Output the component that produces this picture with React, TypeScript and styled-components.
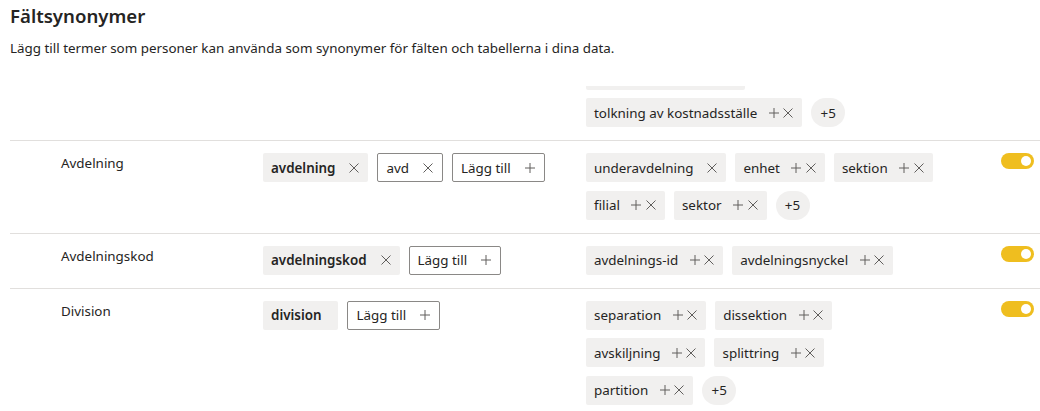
import React from "react";
import styled, { createGlobalStyle } from "styled-components";

const GlobalStyle = createGlobalStyle`
  html, body { margin: 0; padding: 0; background: #ffffff; }
  body { font-family: "Noto Sans", "Segoe UI", sans-serif; color: #252423; overflow: hidden; }
  * { box-sizing: border-box; }
`;

const Page = styled.div`
  width: 1040px;
  height: 411px;
  padding: 2px 0 0 10px;
  display: flex;
  flex-direction: column;
  overflow: hidden;
`;

const Title = styled.h1`
  margin: 0;
  font-size: 18.6px;
  line-height: 28px;
  font-weight: 600;
`;

const Subtitle = styled.p`
  margin: 8px 0 0;
  font-size: 13.4px;
  line-height: 20px;
`;

const Viewport = styled.div`
  margin-top: 28px;
  flex: 1;
  overflow: hidden;
`;

const List = styled.div<{ $offset: number }>`
  margin-top: ${(p) => -p.$offset}px;
  display: flex;
  flex-direction: column;
`;

const Row = styled.div`
  display: grid;
  grid-template-columns: 202px 323px 350px 1fr;
  padding: 12px 6px 13px 51px;
  border-bottom: 1px solid #e1dfdd;
  &:last-child { border-bottom: none; }
`;

const Name = styled.div`
  font-size: 13.4px;
  line-height: 20px;
`;

const ChipWrap = styled.div`
  display: flex;
  flex-wrap: wrap;
  column-gap: 9px;
  row-gap: 8.5px;
  align-content: flex-start;
`;

const Chip = styled.div<{
  $variant: "filled" | "outline";
  $bold?: boolean;
  $tight?: boolean;
  $plain?: boolean;
}>`
  height: 29px;
  display: inline-flex;
  align-items: center;
  gap: ${(p) => (p.$tight ? 11.5 : 14)}px;
  padding: 0 ${(p) => (p.$plain ? 17 : 9)}px 0 8px;
  border-radius: 2px;
  font-size: 13.4px;
  line-height: 20px;
  white-space: nowrap;
  font-weight: ${(p) => (p.$bold ? 600 : 400)};
  background: ${(p) => (p.$variant === "filled" ? "#f1f0ef" : "#ffffff")};
  border: ${(p) => (p.$variant === "outline" ? "1px solid #8a8886" : "none")};
`;

const Actions = styled.span`
  display: inline-flex;
  align-items: center;
  gap: 4.5px;
`;

const More = styled.div`
  height: 29px;
  min-width: 34px;
  padding: 0 7px;
  border-radius: 15px;
  background: #f1f0ef;
  display: inline-flex;
  align-items: center;
  justify-content: center;
  font-size: 13.4px;
`;

const Toggle = styled.div`
  justify-self: end;
  width: 33px;
  height: 16px;
  border-radius: 8px;
  background: #efbe1f;
  display: flex;
  align-items: center;
  justify-content: flex-end;
  padding-right: 3px;
`;

const Knob = styled.span`
  width: 10px;
  height: 10px;
  border-radius: 50%;
  background: #ffffff;
`;

const Icon = styled.svg`
  width: 10px;
  height: 10px;
  display: block;
  stroke: #605e5c;
  stroke-width: 1;
  fill: none;
`;

const CloseIcon = () => (
  <Icon viewBox="0 0 10 10">
    <path d="M0.5 0.5 L9.5 9.5 M9.5 0.5 L0.5 9.5" />
  </Icon>
);

const PlusIcon = () => (
  <Icon viewBox="0 0 10 10">
    <path d="M5 0 V10 M0 5 H10" />
  </Icon>
);

type Synonym = { text: string; bold?: boolean; removable?: boolean; outline?: boolean };
type Suggestion = { text: string; addable?: boolean };

type Field = {
  name: string;
  synonyms: Synonym[];
  suggestions: Suggestion[];
  more?: number;
  toggle?: boolean;
  addButton?: boolean;
};

const fields: Field[] = [
  {
    name: "",
    synonyms: [],
    suggestions: [
      { text: "kostnadsställe-id", addable: true },
      { text: "tolkning av kostnadsställe", addable: true },
    ],
    more: 5,
  },
  {
    name: "Avdelning",
    synonyms: [
      { text: "avdelning", bold: true, removable: true },
      { text: "avd", outline: true, removable: true },
    ],
    suggestions: [
      { text: "underavdelning" },
      { text: "enhet", addable: true },
      { text: "sektion", addable: true },
      { text: "filial", addable: true },
      { text: "sektor", addable: true },
    ],
    more: 5,
    toggle: true,
    addButton: true,
  },
  {
    name: "Avdelningskod",
    synonyms: [{ text: "avdelningskod", bold: true, removable: true }],
    suggestions: [
      { text: "avdelnings-id", addable: true },
      { text: "avdelningsnyckel", addable: true },
    ],
    toggle: true,
    addButton: true,
  },
  {
    name: "Division",
    synonyms: [{ text: "division", bold: true }],
    suggestions: [
      { text: "separation", addable: true },
      { text: "dissektion", addable: true },
      { text: "avskiljning", addable: true },
      { text: "splittring", addable: true },
      { text: "partition", addable: true },
    ],
    more: 5,
    toggle: true,
    addButton: true,
  },
];

export default function App() {
  return (
    <>
      <GlobalStyle />
      <Page>
        <Title>Fältsynonymer</Title>
        <Subtitle>
          Lägg till termer som personer kan använda som synonymer för fälten och tabellerna i dina data.
        </Subtitle>
        <Viewport>
          <List $offset={37.5}>
            {fields.map((f, i) => (
              <Row key={i}>
                <Name>{f.name}</Name>
                <ChipWrap>
                  {f.synonyms.map((s) => (
                    <Chip
                      key={s.text}
                      $variant={s.outline ? "outline" : "filled"}
                      $bold={s.bold}
                      $plain={!s.removable}
                    >
                      {s.text}
                      {s.removable && <CloseIcon />}
                    </Chip>
                  ))}
                  {f.addButton && (
                    <Chip $variant="outline">
                      Lägg till
                      <PlusIcon />
                    </Chip>
                  )}
                </ChipWrap>
                <ChipWrap>
                  {f.suggestions.map((s) => (
                    <Chip key={s.text} $variant="filled" $tight={s.addable}>
                      {s.text}
                      <Actions>
                        {s.addable && <PlusIcon />}
                        <CloseIcon />
                      </Actions>
                    </Chip>
                  ))}
                  {f.more ? <More>+{f.more}</More> : null}
                </ChipWrap>
                {f.toggle ? (
                  <Toggle>
                    <Knob />
                  </Toggle>
                ) : (
                  <span />
                )}
              </Row>
            ))}
          </List>
        </Viewport>
      </Page>
    </>
  );
}
